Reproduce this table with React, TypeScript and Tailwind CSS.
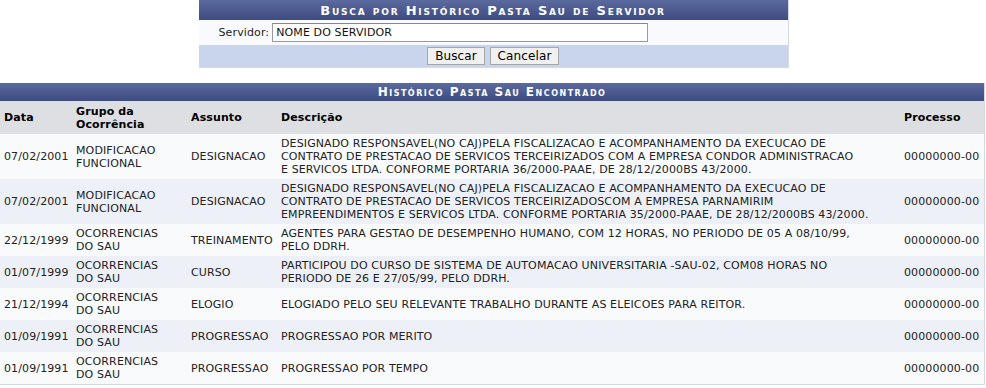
import React from "react";

const rows = [
  {
    data: "07/02/2001",
    grupo: ["MODIFICACAO", "FUNCIONAL"],
    assunto: "DESIGNACAO",
    desc: [
      "DESIGNADO RESPONSAVEL(NO CAJ)PELA FISCALIZACAO E ACOMPANHAMENTO DA EXECUCAO DE",
      "CONTRATO DE PRESTACAO DE SERVICOS TERCEIRIZADOS COM A EMPRESA CONDOR ADMINISTRACAO",
      "E SERVICOS LTDA. CONFORME PORTARIA 36/2000-PAAE, DE 28/12/2000BS 43/2000.",
    ],
  },
  {
    data: "07/02/2001",
    grupo: ["MODIFICACAO", "FUNCIONAL"],
    assunto: "DESIGNACAO",
    desc: [
      "DESIGNADO RESPONSAVEL(NO CAJ)PELA FISCALIZACAO E ACOMPANHAMENTO DA EXECUCAO DE",
      "CONTRATO DE PRESTACAO DE SERVICOS TERCEIRIZADOSCOM A EMPRESA PARNAMIRIM",
      "EMPREENDIMENTOS E SERVICOS LTDA. CONFORME PORTARIA 35/2000-PAAE, DE 28/12/2000BS 43/2000.",
    ],
  },
  {
    data: "22/12/1999",
    grupo: ["OCORRENCIAS", "DO SAU"],
    assunto: "TREINAMENTO",
    desc: [
      "AGENTES PARA GESTAO DE DESEMPENHO HUMANO, COM 12 HORAS, NO PERIODO DE 05 A 08/10/99,",
      "PELO DDRH.",
    ],
  },
  {
    data: "01/07/1999",
    grupo: ["OCORRENCIAS", "DO SAU"],
    assunto: "CURSO",
    desc: [
      "PARTICIPOU DO CURSO DE SISTEMA DE AUTOMACAO UNIVERSITARIA -SAU-02, COM08 HORAS NO",
      "PERIODO DE 26 E 27/05/99, PELO DDRH.",
    ],
  },
  {
    data: "21/12/1994",
    grupo: ["OCORRENCIAS", "DO SAU"],
    assunto: "ELOGIO",
    desc: ["ELOGIADO PELO SEU RELEVANTE TRABALHO DURANTE AS ELEICOES PARA REITOR."],
  },
  {
    data: "01/09/1991",
    grupo: ["OCORRENCIAS", "DO SAU"],
    assunto: "PROGRESSAO",
    desc: ["PROGRESSAO POR MERITO"],
  },
  {
    data: "01/09/1991",
    grupo: ["OCORRENCIAS", "DO SAU"],
    assunto: "PROGRESSAO",
    desc: ["PROGRESSAO POR TEMPO"],
  },
];

const Lines = ({ items }: { items: string[] }) => (
  <>
    {items.map((t, i) => (
      <div key={i} className="whitespace-nowrap">
        {t}
      </div>
    ))}
  </>
);

export default function App() {
  return (
    <div className="w-[986px] h-[388px] bg-white text-[11px] leading-[13px] tracking-[0.12px] text-[#222] font-['Verdana','DejaVu_Sans',sans-serif]">
      {/* busca */}
      <div className="flex justify-center pl-[1px]">
        <div className="w-[590px] border-r border-[#d5d9e3]">
          <div className="h-[20px] flex items-center justify-center bg-gradient-to-b from-[#5b6a9e] to-[#3d4b80] text-white font-bold [font-variant:small-caps] text-[13px] tracking-[1.8px]">
            Busca por Histórico Pasta Sau de Servidor
          </div>
          <div className="h-[25px] flex items-center bg-[#f9fafd] pl-[20px] gap-[3px]">
            <span>Servidor:</span>
            <div className="w-[376px] h-[19px] border border-[#999] border-t-[#888] bg-white flex items-center px-[3px] text-[#111]">
              NOME DO SERVIDOR
            </div>
          </div>
          <div className="h-[23px] flex items-center justify-center gap-[5px] bg-[#c8d5ec] border-b border-[#d5d9e3]">
            <button className="h-[18px] w-[58px] bg-[#f0f0f0] border border-[#a7a7a7] text-[12px] leading-[14px] text-black">
              Buscar
            </button>
            <button className="h-[18px] w-[69px] bg-[#f0f0f0] border border-[#a7a7a7] text-[12px] leading-[14px] text-black">
              Cancelar
            </button>
          </div>
        </div>
      </div>

      {/* resultados */}
      <div className="mt-[15px] w-[985px] border-r border-b border-[#d5d9e3]">
        <div className="h-[18px] flex items-center justify-center bg-gradient-to-b from-[#5b6a9e] to-[#3d4b80] text-white font-bold [font-variant:small-caps] text-[12px] tracking-[1.5px]">
          Histórico Pasta Sau Encontrado
        </div>
        <table className="w-full table-fixed border-collapse">
          <colgroup>
            <col className="w-[72px]" />
            <col className="w-[115px]" />
            <col className="w-[90px]" />
            <col />
            <col className="w-[84px]" />
          </colgroup>
          <thead>
            <tr className="h-[33px] bg-[#dedfe3] text-black font-bold text-left">
              <th className="pl-[4px] align-middle">Data</th>
              <th className="pl-[4px] align-middle">
                Grupo da
                <br />
                Ocorrência
              </th>
              <th className="pl-[4px] align-middle">Assunto</th>
              <th className="pl-[4px] align-middle">Descrição</th>
              <th className="pl-[4px] align-middle">Processo</th>
            </tr>
          </thead>
          <tbody>
            {rows.map((r, i) => (
              <tr
                key={i}
                className={i % 2 === 0 ? "bg-[#f9fafc]" : "bg-[#edf0f6]"}
              >
                <td className="pl-[4px] py-[3px] align-middle">{r.data}</td>
                <td className="pl-[4px] py-[3px] align-middle">
                  <Lines items={r.grupo} />
                </td>
                <td className="pl-[4px] py-[3px] align-middle">{r.assunto}</td>
                <td className="pl-[4px] py-[3px] align-middle">
                  <Lines items={r.desc} />
                </td>
                <td className="pl-[4px] py-[3px] align-middle">00000000-00</td>
              </tr>
            ))}
          </tbody>
        </table>
      </div>
    </div>
  );
}
